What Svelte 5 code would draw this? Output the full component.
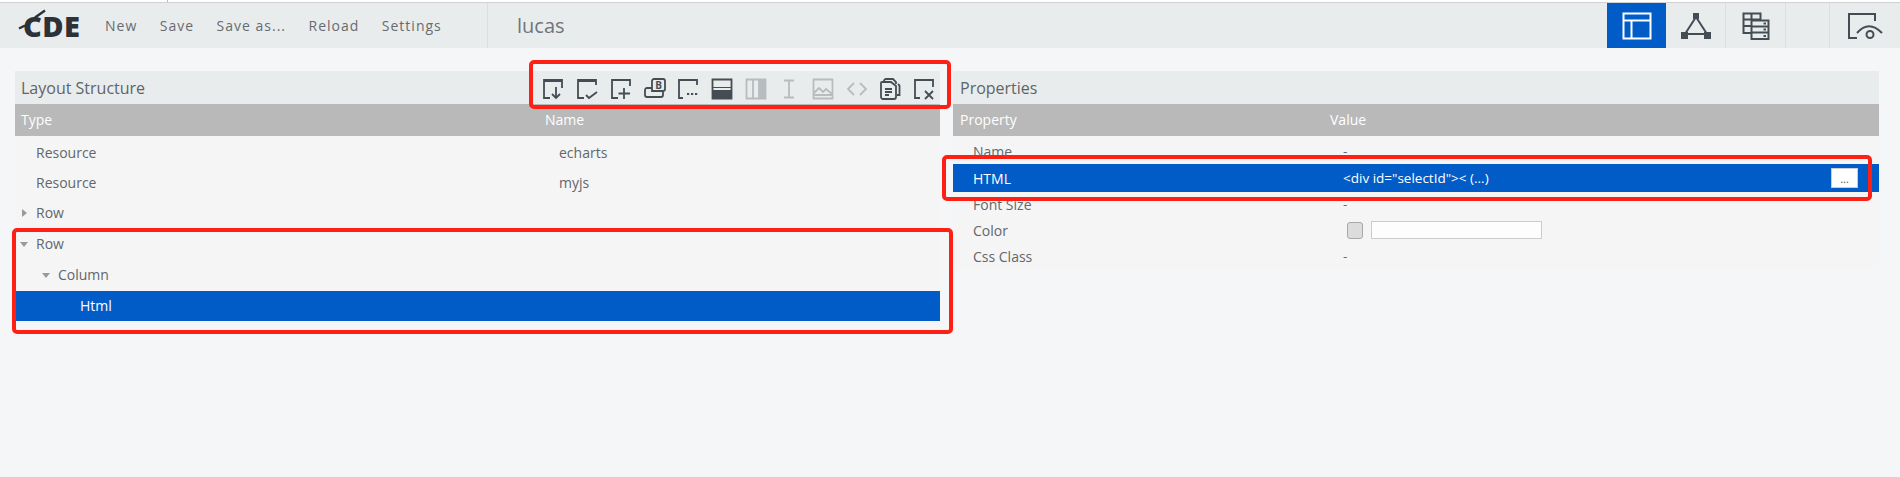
<script lang="ts">
	const menu = ['New', 'Save', 'Save as...', 'Reload', 'Settings'];

	const frame = (r: number, b: number) => `M${b} 20H2V2H20V${r}`;

	const tools = [
		{ d: frame(10, 8) + 'M2 3H20M14 9V20M10 16l4 4 4-4' },
		{ d: frame(7, 8) + 'M2 3H20M10 17l3 3 8-6' },
		{ d: frame(8, 8) + 'M14 10V21M8.500 15.500H20' },
		{ d: 'M8 5V3a2 2 0 0 1 2-2H19a2 2 0 0 1 2 2V11a2 2 0 0 1-2 2H8V5M8 10H3a2 2 0 0 0-2 2V17a2 2 0 0 0 2 2H17a2 2 0 0 0 2-2V13', letter: true },
		{ d: frame(7, 6) + 'M10 16h2.200M14 16h2.200M18 16h2.200' },
		{ d: 'M1.500 1.500H20.500V20.500H1.500Z', fill: 'M1 12H21V21H1ZM1 9H21V10H1Z' },
		{ d: 'M1.500 1.500H20.500V20.500H1.500ZM8 1.500V20.500M14 1.500V20.500', fill: 'M14 1H21V21H14Z', off: true },
		{ d: 'M6 2.500H16M11 2.500V19.500M6 19.500H16', off: true },
		{ d: 'M1.500 1.500H20.500V20.500H1.500ZM2 15l5-5 4 4 3-3 6 5M1.500 17H20.500', off: true },
		{ d: 'M8 5l-6 6 6 6M14 5l6 6-6 6', off: true },
		{ d: 'M10 1H14L17 4V6M5 4V3a2 2 0 0 1 2-2H11M3 4H12L17 8V19a2 2 0 0 1-2 2H4a2 2 0 0 1-2-2V5a1 1 0 0 1 1-1ZM6 11H13M6 14H13M6 17H10M19 6L20.500 7.500V17H18' },
		{ d: frame(9, 7) + 'M12 13l8 8M20 13l-8 8' }
	];

	const tree = [
		{ type: 'Resource', name: 'echarts', depth: 0, h: 30 },
		{ type: 'Resource', name: 'myjs', depth: 0, h: 30 },
		{ type: 'Row', name: '', depth: 0, h: 31, arrow: 'closed' },
		{ type: 'Row', name: '', depth: 0, h: 31, arrow: 'open' },
		{ type: 'Column', name: '', depth: 1, h: 31, arrow: 'open' },
		{ type: 'Html', name: '', depth: 2, h: 30, selected: true }
	];
</script>

<div class="page">
	<div class="topline"><span class="tick"></span></div>

	<header class="header">
		<div class="logo">
			<svg class="logo-mark" viewBox="0 0 30 30" aria-hidden="true">
				<path d="M1 22.500L7 19.500M17 11.500L27 4.500" />
			</svg>
			<span>CDE</span>
		</div>
		<nav class="menu">
			{#each menu as item}
				<span>{item}</span>
			{/each}
		</nav>
		<div class="file">lucas</div>
		<div class="views">
			<div class="view active">
				<svg viewBox="0 0 30 28" aria-hidden="true">
					<path d="M1.500 1.500H28.500V26.500H1.500ZM1.500 8.500H28.500M9.500 8.500V26.500" />
				</svg>
			</div>
			<div class="view">
				<svg viewBox="0 0 32 28" aria-hidden="true">
					<path d="M16 5L5 22H27Z" />
					<path class="solid" d="M13 1H19V7H13ZM1 20H8V27H1ZM24 20H31V27H24Z" />
				</svg>
			</div>
			<div class="view">
				<svg viewBox="0 0 28 28" aria-hidden="true">
					<path d="M10 21H1.500V1.500H18.500V8M1.500 7.500H18.500M1.500 14H10M9.500 1.500V8M9.500 8.500H26.500V27H9.500ZM9.500 14.500H26.500M9.500 20.500H26.500M21.500 11.500H24M21.500 17.500H24M21.500 24H24" />
				</svg>
			</div>
			<div class="view spacer"></div>
			<div class="view last">
				<svg viewBox="0 0 36 28" aria-hidden="true">
					<path d="M10 26H2V2H28V9" />
					<path d="M10 21C18 12 26 12 35 21" />
					<circle cx="23" cy="22.500" r="3.500" />
				</svg>
			</div>
		</div>
	</header>

	<main class="main">
		<section class="panel left">
			<div class="title">
				<span>Layout Structure</span>
				<div class="tools">
					{#each tools as tool}
						<svg class="tool" class:off={tool.off} viewBox="0 0 22 22" aria-hidden="true">
							{#if tool.fill}<path class="solid" d={tool.fill} />{/if}
							<path d={tool.d} />
							{#if tool.letter}<text x="14.500" y="10.500">B</text>{/if}
						</svg>
					{/each}
				</div>
			</div>
			<div class="columns tree-cols">
				<span>Type</span>
				<span>Name</span>
			</div>
			<div class="rows tree">
				{#each tree as row}
					<div class="tree-row tree-cols" class:selected={row.selected} style="height: {row.h}px">
						<span class="cell" style="padding-left: {21 + row.depth * 22}px">
							{#if row.arrow}<i class="arrow {row.arrow}"></i>{/if}
							{row.type}
						</span>
						<span class="name">{row.name}</span>
					</div>
				{/each}
			</div>
		</section>

		<section class="panel right">
			<div class="title"><span>Properties</span></div>
			<div class="columns prop-cols">
				<span>Property</span>
				<span>Value</span>
			</div>
			<div class="rows props">
				<div class="prop prop-cols first"><span>Name</span><span class="value">-</span></div>
				<div class="prop prop-cols selected">
					<span>HTML</span>
					<span class="value">&lt;div id="selectId"&gt;&lt; (...)</span>
					<button class="more">...</button>
				</div>
				<div class="prop prop-cols"><span>Font Size</span><span class="value">-</span></div>
				<div class="prop prop-cols">
					<span>Color</span>
					<span class="value colour"><i class="swatch"></i><i class="field"></i></span>
				</div>
				<div class="prop prop-cols"><span>Css Class</span><span class="value">-</span></div>
			</div>
		</section>
	</main>

	<!-- annotations drawn over the screenshot -->
	<div class="mark mark-tools"></div>
	<div class="mark mark-tree"></div>
	<div class="mark mark-html"></div>
</div>

<style>
	:global(body) {
		margin: 0;
		background: #f5f6f8;
	}

	.page {
		position: relative;
		height: 477px;
		overflow: hidden;
		background: #f5f6f8;
		font-family: 'Open Sans', sans-serif;
		font-size: 14px;
		color: #5f6468;
	}

	.topline {
		position: relative;
		height: 2px;
		background: #fff;
		border-bottom: 1px solid #cfd1d2;
	}

	.tick {
		position: absolute;
		left: 167px;
		top: 0;
		width: 1px;
		height: 2px;
		background: #bbb;
	}

	.header {
		display: flex;
		align-items: center;
		height: 45px;
		background: #e9eced;
	}

	.logo {
		position: relative;
		width: 105px;
		padding-left: 23px;
		box-sizing: border-box;
		font-size: 29px;
		font-weight: 800;
		line-height: 40px;
		letter-spacing: 0.5px;
		color: #2c3238;
	}

	.logo-mark {
		position: absolute;
		left: 18px;
		top: 0;
		width: 30px;
		height: 30px;
		fill: none;
		stroke: #2c3238;
		stroke-width: 2.500;
	}

	.menu {
		display: flex;
		gap: 22.500px;
		width: 382px;
		height: 45px;
		align-items: center;
		letter-spacing: 1px;
		border-right: 1px solid #dcdfe0;
		color: #666b70;
	}

	.file {
		padding-left: 29px;
		font-size: 20px;
		color: #70757a;
	}

	.views {
		display: flex;
		margin-left: auto;
		height: 45px;
	}

	.view {
		display: flex;
		align-items: center;
		justify-content: center;
		width: 60px;
		border-right: 1px solid #dcdfe0;
		box-sizing: border-box;
	}

	.view.active {
		width: 59px;
		background: #015cc8;
		border-right: 0;
	}

	.view.spacer {
		width: 44px;
	}

	.view.last {
		width: 70px;
		border-right: 0;
	}

	.view svg {
		height: 28px;
		fill: none;
		stroke: #444c54;
		stroke-width: 2;
	}

	.view.active svg {
		width: 30px;
		stroke: #fff;
	}

	.view .solid {
		fill: #444c54;
		stroke: none;
	}

	.main {
		display: flex;
		gap: 13px;
		padding: 23px 21px 0 15px;
	}

	.left {
		flex: 0 0 925px;
	}

	.right {
		flex: 1;
		min-width: 0;
	}

	.title {
		display: flex;
		align-items: center;
		justify-content: space-between;
		height: 33px;
		padding-left: 6px;
		background: #e9eced;
		font-size: 16px;
	}

	.right .title {
		padding-left: 7px;
	}

	.tools {
		display: flex;
		gap: 11.700px;
		margin-right: 5px;
		padding-top: 2px;
	}

	.tool {
		width: 22px;
		height: 22px;
		fill: none;
		stroke: #444c54;
		stroke-width: 1.800;
	}

	.tool .solid {
		fill: #444c54;
		stroke: none;
	}

	.tool text {
		font-family: 'Open Sans', sans-serif;
		font-size: 10px;
		font-weight: 700;
		fill: #444c54;
		stroke: none;
		text-anchor: middle;
	}

	.tool.off {
		stroke: #b8bcbe;
	}

	.tool.off .solid {
		fill: #b8bcbe;
	}

	.columns {
		height: 32px;
		box-sizing: border-box;
		padding-bottom: 2px;
		align-items: center;
		background: #b9b9b9;
		color: #fff;
		font-size: 14px;
	}

	.tree-cols {
		display: grid;
		grid-template-columns: 530px 1fr;
	}

	.prop-cols {
		display: grid;
		grid-template-columns: 377px 1fr;
	}

	.columns.tree-cols {
		padding-left: 6px;
		grid-template-columns: 524px 1fr;
	}

	.columns.prop-cols {
		padding-left: 7px;
		grid-template-columns: 370px 1fr;
	}

	.rows {
		background: #f5f5f5;
	}

	.rows.tree {
		padding: 2px 0 4px;
	}

	.tree-row {
		box-sizing: border-box;
		padding-bottom: 2px;
		align-items: center;
		font-size: 14px;
		color: #62676b;
	}

	.tree-row.selected,
	.prop.selected {
		background: #015cc8;
		color: #fff;
	}

	.cell {
		position: relative;
	}

	.name {
		padding-left: 14px;
	}

	.arrow {
		position: absolute;
		margin-left: -16px;
		top: 8px;
		width: 0;
		height: 0;
		border-style: solid;
	}

	.arrow.closed {
		margin-left: -14px;
		top: 6px;
		border-width: 4.500px 0 4.500px 5px;
		border-color: transparent transparent transparent #9a9a9a;
	}

	.arrow.open {
		top: 8px;
		border-width: 5px 4.500px 0 4.500px;
		border-color: #9a9a9a transparent transparent transparent;
	}

	.props {
		height: 134px;
	}

	.prop {
		position: relative;
		height: 26px;
		box-sizing: border-box;
		padding: 0 0 2px 20px;
		align-items: center;
		grid-template-columns: 370px 1fr;
		font-size: 14px;
		color: #62676b;
	}

	.prop.first {
		height: 28px;
		padding: 2px 0 0 20px;
	}

	.prop.selected {
		height: 28px;
		padding-bottom: 0;
	}

	.value {
		font-size: 13.500px;
	}

	.colour {
		display: flex;
		align-items: center;
		gap: 8px;
	}

	.swatch {
		flex: none;
		width: 14px;
		height: 15px;
		background: #dcdcdc;
		border: 1px solid #a8a8a8;
		border-radius: 3px;
		margin-left: 4px;
	}

	.field {
		width: 169px;
		height: 16px;
		background: #fdfdfd;
		border: 1px solid #cccccc;
	}

	.more {
		position: absolute;
		right: 21px;
		top: 4px;
		width: 27px;
		height: 20px;
		padding: 0 0 4px;
		background: #fff;
		border: 1px solid #ccc;
		color: #555;
		font: 11px 'Open Sans', sans-serif;
		line-height: 20px;
	}

	.mark {
		position: absolute;
		box-sizing: border-box;
		border: 4px solid #ff2015;
		border-radius: 5px;
	}

	.mark-tools {
		left: 529px;
		top: 60px;
		width: 422px;
		height: 49px;
	}

	.mark-tree {
		left: 12px;
		top: 228px;
		width: 941px;
		height: 106px;
	}

	.mark-html {
		left: 942px;
		top: 155px;
		width: 930px;
		height: 46px;
	}
</style>
